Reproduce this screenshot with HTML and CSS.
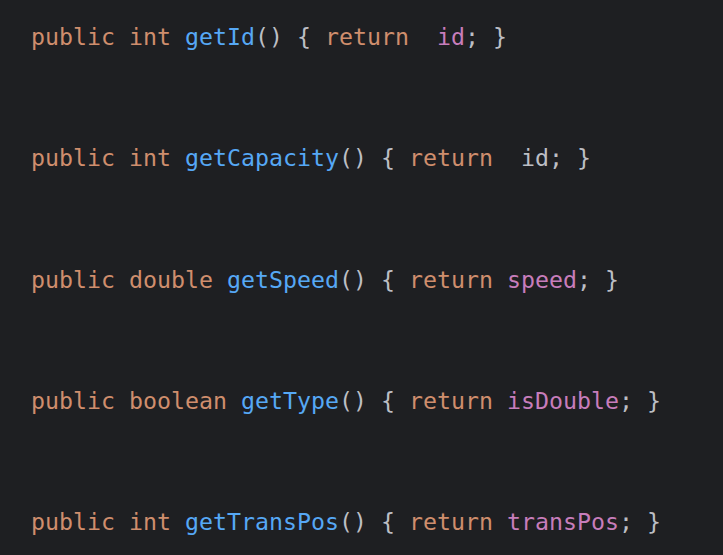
FILE: index.html
```html
<!DOCTYPE html>
<html>
<head>
<meta charset="utf-8">
<link rel="stylesheet" href="styles.css">
</head>
<body>
<div class="code">
  <div class="line"><span class="kw">public int </span><span class="fn">getId</span>() { <span class="kw">return</span>  <span class="fld">id</span>; }</div>
  <div class="line"><span class="kw">public int </span><span class="fn">getCapacity</span>() { <span class="kw">return</span>  id; }</div>
  <div class="line"><span class="kw">public double </span><span class="fn">getSpeed</span>() { <span class="kw">return</span> <span class="fld">speed</span>; }</div>
  <div class="line"><span class="kw">public boolean </span><span class="fn">getType</span>() { <span class="kw">return</span> <span class="fld">isDouble</span>; }</div>
  <div class="line"><span class="kw">public int </span><span class="fn">getTransPos</span>() { <span class="kw">return</span> <span class="fld">transPos</span>; }</div>
</div>
</body>
</html>
```
FILE: styles.css
```css
html, body {
  margin: 0;
  padding: 0;
  background: #1e1f22;
  height: 100%;
}
.code {
  display: flex;
  flex-direction: column;
  gap: 91.25px;
  padding: 22px 0 0 31px;
  font-family: "DejaVu Sans Mono", "Liberation Mono", monospace;
  font-size: 23.25px;
  line-height: 30px;
  color: #bcbec4;
  white-space: pre;
}
.kw { color: #cf8e6d; }
.fn { color: #56a8f5; }
.fld { color: #c77dbb; }
```
